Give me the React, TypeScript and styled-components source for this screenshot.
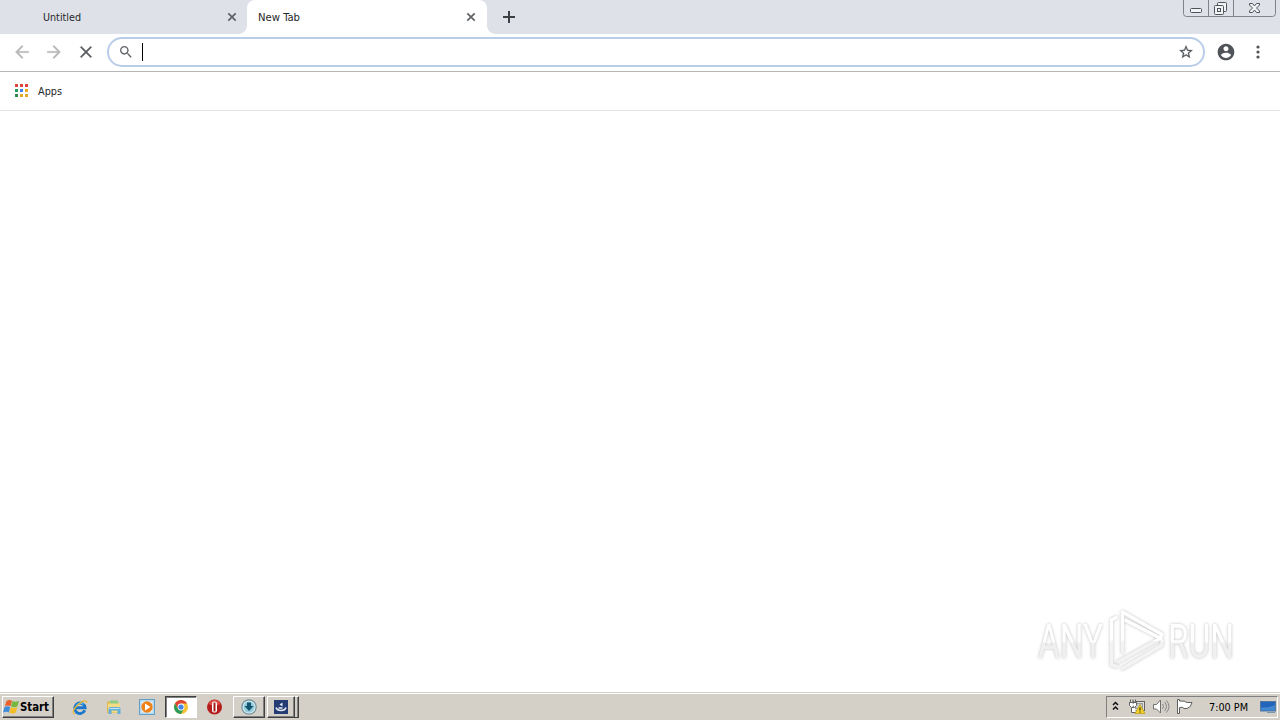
import type { ReactNode } from "react";
import styled, { createGlobalStyle, css } from "styled-components";

export default function App() {
  return (
    <>
      <GlobalStyle />
      <Desktop>
        <TabStrip>
          <Tab $width={247} $pad={43}>
            <TabTitle $width={38}>Untitled</TabTitle>
            <CloseIcon />
          </Tab>
          <Tab $active $width={240} $pad={11}>
            <TabTitle $width={42}>New Tab</TabTitle>
            <CloseIcon />
          </Tab>
          <NewTab>
            <svg width="12" height="12" viewBox="0 0 12 12">
              <path d="M6 0v12M0 6h12" stroke="#3c4043" strokeWidth="2" />
            </svg>
          </NewTab>
          <WindowControls />
        </TabStrip>
        <Toolbar>
          <NavIcon>
            <Material size={20} bold color="#b8b8b8" d="M20 11H7.83l5.59-5.59L12 4l-8 8 8 8 1.41-1.41L7.83 13H20v-2z" />
          </NavIcon>
          <NavIcon>
            <Material size={20} bold color="#b8b8b8" d="M12 4l-1.41 1.41L16.17 11H4v2h12.17l-5.58 5.59L12 20l8-8z" />
          </NavIcon>
          <NavIcon>
            <Material size={20} bold color="#5a5d61" d="M19 6.41L17.59 5 12 10.59 6.41 5 5 6.41 10.59 12 5 17.59 6.41 19 12 13.41 17.59 19 19 17.59 13.41 12z" />
          </NavIcon>
          <Omnibox>
            <Material
              size={16}
              color="#5f6368"
              d="M15.5 14h-.79l-.28-.27C15.41 12.59 16 11.11 16 9.5 16 5.91 13.09 3 9.5 3S3 5.91 3 9.5 5.91 16 9.5 16c1.61 0 3.09-.59 4.23-1.57l.27.28v.79l5 4.99L20.49 19l-4.99-5zm-6 0C7.01 14 5 11.99 5 9.5S7.01 5 9.5 5 14 7.01 14 9.5 11.99 14 9.5 14z"
            />
            <Caret />
            <Material
              size={16}
              bold
              color="#4f5358"
              d="M22 9.24l-7.19-.62L12 2 9.19 8.63 2 9.24l5.46 4.73L5.82 21 12 17.27 18.18 21l-1.63-7.03L22 9.24zM12 15.4l-3.76 2.27 1-4.28-3.32-2.88 4.38-.38L12 6.1l1.71 4.04 4.38.38-3.32 2.88 1 4.28L12 15.4z"
            />
          </Omnibox>
          <Profile>
            <Material
              size={20}
              color="#505357"
              d="M12 2C6.48 2 2 6.48 2 12s4.48 10 10 10 10-4.48 10-10S17.52 2 12 2zm0 3c1.66 0 3 1.34 3 3s-1.34 3-3 3-3-1.34-3-3 1.34-3 3-3zm0 14.2c-2.5 0-4.71-1.28-6-3.22.03-1.99 4-3.08 6-3.08 1.99 0 5.97 1.09 6 3.08-1.29 1.94-3.5 3.22-6 3.22z"
            />
          </Profile>
          <Menu>
            <svg width="4" height="14" viewBox="0 0 4 14" fill="#505357">
              <circle cx="2" cy="2" r="1.6" />
              <circle cx="2" cy="7" r="1.6" />
              <circle cx="2" cy="12" r="1.6" />
            </svg>
          </Menu>
        </Toolbar>
        <BookmarkBar>
          <AppsGrid>
            {appDots.map((color, i) => (
              <Dot key={i} $color={color} />
            ))}
          </AppsGrid>
          <Label $width={24}>Apps</Label>
        </BookmarkBar>
        <Page />
        <Taskbar>
          <StartButton>
            <WindowsFlag />
            <Label $width={29} $bold>
              Start
            </Label>
          </StartButton>
          <QuickLaunch>
            <ExplorerIcon />
            <FolderIcon />
            <PlayerIcon />
          </QuickLaunch>
          <TaskButton $kind="pressed" $width={32}>
            <ChromeIcon />
          </TaskButton>
          <TaskButton $kind="flat" $width={36}>
            <OperaIcon />
          </TaskButton>
          <TaskButton $kind="raised" $width={32}>
            <DownloadIcon />
          </TaskButton>
          <Gap />
          <TaskButton $kind="raised" $width={28}>
            <InstallerIcon />
          </TaskButton>
          <StackEdge />
          <Tray>
            <TrayIcons />
            <Clock>
              <Label $width={39}>7:00 PM</Label>
            </Clock>
            <DesktopIcon />
          </Tray>
        </Taskbar>
        <Watermark>
          <WatermarkArt />
        </Watermark>
      </Desktop>
    </>
  );
}

const appDots = [
  "#dc4638", "#dc4638", "#dc4638",
  "#249a5b", "#3b82ee", "#edaa22",
  "#33864f", "#e3a92c", "#e3a92c",
];

type MaterialProps = { size: number; color: string; d: string; bold?: boolean };

function Material({ size, color, d, bold }: MaterialProps) {
  return (
    <svg width={size} height={size} viewBox="0 0 24 24" fill={color}>
      <path d={d} stroke={bold ? color : "none"} strokeWidth="0.3" />
    </svg>
  );
}

function Label({ children, $width, $bold }: { children: ReactNode; $width: number; $bold?: boolean }) {
  return (
    <LabelBox $width={$width}>
      <svg width={$width} height="15">
        <text
          x="0"
          y="11"
          fontSize={$bold ? 11.5 : 11}
          fontWeight={$bold ? 700 : 400}
          textLength={$width}
          lengthAdjust="spacingAndGlyphs"
        >
          {children}
        </text>
      </svg>
    </LabelBox>
  );
}

function TabTitle({ children, $width }: { children: ReactNode; $width: number }) {
  return (
    <TitleBox>
      <Label $width={$width}>{children}</Label>
    </TitleBox>
  );
}

function CloseIcon() {
  return (
    <svg width="8" height="8" viewBox="0 0 8 8">
      <path d="M.3.3l7.4 7.4M7.7.3L.3 7.7" stroke="#5f6368" strokeWidth="1.7" />
    </svg>
  );
}

function WindowControls() {
  return (
    <Controls>
      <svg width="93" height="17" viewBox="0 0 93 17" fill="none" stroke="#7f838b">
        <path d="M.5 0v13.5q0 3 3 3h86q3 0 3-3V0M25.5 0v16M50.5 0v16" />
        <g stroke="#4f535b" fill="#f2f3f5">
          <rect x="7.5" y="8.5" width="11" height="4" rx="1" />
          <rect x="34.5" y="2.5" width="9" height="9" rx="1" />
          <rect x="31.5" y="5.5" width="9" height="9" rx="1" />
          <rect x="34.5" y="8.5" width="3" height="3" />
          <path d="M66.5 3.5h3l2 2.5 2-2.5h3v1.5l-3 3 3 3v1.5h-3l-2-2.5-2 2.5h-3V11l3-3-3-3z" />
        </g>
      </svg>
    </Controls>
  );
}

function WindowsFlag() {
  return (
    <svg width="17" height="16" viewBox="0 0 17 16">
      <path d="M3.5 2q3-1.8 5.500-.3L7.500 7.300q-3-1.500-5.700.2z" fill="#e8602c" />
      <path d="M9.5 2q3 1.700 6.500-.3l-1.500 5.600q-3 1.700-6.500.2z" fill="#76b83d" />
      <path d="M1.5 8.2q3-1.700 5.700-.2l-1.400 5.500q-3-1.500-5.800.3z" fill="#3e8ddb" />
      <path d="M7.8 8.3q3 1.500 6.500-.2l-1.400 5.400q-3 1.800-6.500.2z" fill="#f5bd28" />
    </svg>
  );
}

function ExplorerIcon() {
  return (
    <svg width="16" height="17" viewBox="0 0 17 17" fill="none">
      <path d="M13.6 11.5A5.6 5.6 0 1 1 14 8.8H4" stroke="#1c77c8" strokeWidth="3" />
      <path d="M4.5 6.8A4.8 4.8 0 0 1 12 5" stroke="#58bdf0" strokeWidth="1.3" />
      <path d="M2.8 15.2C-.8 14.5 2.5 8.5 7 5s9-5.3 8.8-1.2" stroke="#e8b92e" strokeWidth="1.3" />
    </svg>
  );
}

function FolderIcon() {
  return (
    <svg width="16" height="16" viewBox="0 0 16 16">
      <path d="M1 2.500h5l1 1.500h6v10H1z" fill="#dfb950" />
      <path d="M4 1.500h8v5H4z" fill="#8fcb83" />
      <path d="M2 4.500h12v9H2z" fill="#f3dc82" />
      <path d="M2.5 15V10q0-2 2-2h8q2 0 2 2v5h-3v-3.500h-6V15z" fill="#62aedb" />
      <path d="M3.5 9.500h10" stroke="#c4e6f5" />
    </svg>
  );
}

function PlayerIcon() {
  return (
    <svg width="16" height="16" viewBox="0 0 16 16">
      <rect x=".5" y=".5" width="15" height="15" fill="#b9d9ee" stroke="#609fc9" />
      <rect x="2.5" y="2.5" width="11" height="11" fill="#e5f0f5" />
      <circle cx="8" cy="8" r="5.7" fill="#ef8119" />
      <path d="M6 4.500v7L11.500 8z" fill="#fff" />
    </svg>
  );
}

function ChromeIcon() {
  return (
    <svg width="14" height="14" viewBox="0 0 14 14">
      <circle cx="7" cy="7" r="7" fill="#f5c333" />
      <path d="M.94 3.500A7 7 0 0 1 13.060 3.500H7L4 8.800z" fill="#df4436" />
      <path d="M.94 3.500L4 8.750 7 10.500l2.500-1L7 14A7 7 0 0 1 .94 3.500z" fill="#2c9d59" />
      <circle cx="7" cy="7" r="3.4" fill="#fff" />
      <circle cx="7" cy="7" r="2.6" fill="#4386e8" />
    </svg>
  );
}

function OperaIcon() {
  return (
    <svg width="16" height="16" viewBox="0 0 16 16">
      <circle cx="7.5" cy="8" r="7.5" fill="#b51d1d" />
      <path d="M1.5 5a6.5 6.5 0 0 1 12 0Q7.500 8 1.500 5z" fill="#dc4a43" />
      <rect x="5" y="2.5" width="5" height="11" rx="2" fill="#fff" />
      <rect x="6.500" y="3.500" width="2" height="9" fill="#a51a1a" />
    </svg>
  );
}

function DownloadIcon() {
  return (
    <svg width="16" height="16" viewBox="0 0 16 16">
      <circle cx="8" cy="8" r="7.2" fill="#d8edf2" stroke="#708e9a" strokeWidth="1.2" />
      <circle cx="8" cy="8" r="5.5" fill="#93cbda" />
      <path d="M6 3.500h4V7h2.500L8 12 3.500 7H6z" fill="#12546f" />
    </svg>
  );
}

function InstallerIcon() {
  return (
    <svg width="14" height="14" viewBox="0 0 14 14">
      <rect width="14" height="14" fill="#243b73" />
      <path d="M2 7.5q1 3 5 3t5-3M4.500 8h4" fill="none" stroke="#e8edf5" strokeWidth="1.6" />
      <path d="M5.5 4.500L8.500 2.500v4z" fill="#e8edf5" />
    </svg>
  );
}

function TrayIcons() {
  return (
    <svg width="90" height="20" viewBox="1 0 90 20">
      <path d="M7 8l2.5-2.5L12 8M7 12.5L9.500 10l2.500 2.500" fill="none" stroke="#111" strokeWidth="1.5" />
      <g stroke="#626262" fill="#fff">
        <rect x="27.5" y="4.5" width="11" height="9" fill="#e2e2df" />
        <rect x="29.5" y="6.5" width="7" height="5" fill="#c9cbc9" stroke="#999" />
        <path d="M24.5 2.500v3h-1v3l2 2v5h5M29.500 2.500v3h1v3l-2 2h-3M27 2.500v3M23.500 5.500h7" />
      </g>
      <path d="M34 7.500l5 9H29z" fill="#f3d12c" stroke="#bf9811" strokeWidth=".7" />
      <path d="M34 10.500v3M34 14.500v1" stroke="#302800" strokeWidth="1.2" />
      <path d="M47.5 7.500h3L54.500 3v13l-4-4h-3z" fill="#fff" stroke="#707070" />
      <path d="M56.5 7q2 2.500 0 5M58.500 5q4 4.500 0 9M60.500 3.500q5 6 0 12" fill="none" stroke="#85858a" />
      <path d="M71.5 2.500v14h2v-6q3-1 4.500 1h3q4-1 5-6h-5q-2-2-7.500-1.500v-1.500z" fill="#fff" stroke="#5f5f5f" />
    </svg>
  );
}

function DesktopIcon() {
  return (
    <svg width="16" height="14" viewBox="0 0 16 14">
      <rect x=".5" y="1.5" width="15" height="9.5" fill="#2264bc" stroke="#55789f" />
      <path d="M1 7.500Q8 8 15 5v5.500H1z" fill="#4387cf" />
      <path d="M7 12.500h8" stroke="#7d96ab" />
    </svg>
  );
}

function WatermarkArt() {
  return (
    <svg width="230" height="76" viewBox="1030 602 230 76">
      <defs>
        <linearGradient id="fade" x1="0" y1="0" x2="0" y2="1">
          <stop offset="0.5" stopColor="#fff" />
          <stop offset="0.53" stopColor="#f0f0f0" />
        </linearGradient>
        <linearGradient id="markFade" gradientUnits="userSpaceOnUse" x1="0" y1="610" x2="0" y2="670">
          <stop offset="0.5" stopColor="#fff" />
          <stop offset="0.53" stopColor="#f3f3f3" />
        </linearGradient>
      </defs>
      <g fill="url(#fade)" fontFamily="Roboto, sans-serif" fontSize="49">
        <text x="1038" y="658" textLength="65" lengthAdjust="spacingAndGlyphs">
          ANY
        </text>
        <text x="1168" y="658" textLength="66" lengthAdjust="spacingAndGlyphs">
          RUN
        </text>
      </g>
      <g fill="none" stroke="url(#markFade)" strokeWidth="3.4" strokeLinejoin="round" strokeLinecap="round">
        <path d="M1116 617.5L1111.500 620v45l5 1.500" />
        <path d="M1122.5 652v-40L1162 634.500l-2 3.500-34-17.500" />
        <path d="M1118 662L1161 638M1122.500 668.500L1162 645v-4" />
      </g>
    </svg>
  );
}

const GlobalStyle = createGlobalStyle`
  * {
    box-sizing: border-box;
  }

  body {
    margin: 0;
    overflow: hidden;
    font-family: "DejaVu Sans Condensed", "DejaVu Sans", sans-serif;
    font-size: 11px;
    background: #fff;
  }

  svg {
    display: block;
    flex-shrink: 0;
    overflow: visible;
  }
`;

const Desktop = styled.main`
  position: relative;
  display: flex;
  flex-direction: column;
  width: 1280px;
  height: 720px;
`;

const TabStrip = styled.div`
  display: flex;
  height: 34px;
  background: #dee1e8;
`;

const Tab = styled.div<{ $active?: boolean; $width: number; $pad: number }>`
  position: relative;
  display: flex;
  align-items: center;
  width: ${(props) => props.$width}px;
  padding: 0 11px 0 ${(props) => props.$pad}px;

  ${(props) =>
    props.$active &&
    css`
      padding-right: 12px;
      background: #fff;
      border-radius: 8px 8px 0 0;

      &::before,
      &::after {
        content: "";
        position: absolute;
        bottom: 0;
        width: 8px;
        height: 8px;
      }

      &::before {
        left: -8px;
        background: radial-gradient(circle at 0 0, transparent 7.5px, #fff 8px);
      }

      &::after {
        right: -8px;
        background: radial-gradient(circle at 100% 0, transparent 7.5px, #fff 8px);
      }
    `}
`;

const TitleBox = styled.span`
  flex: 1;
  color: #25272a;
`;

const LabelBox = styled.span<{ $width: number }>`
  display: block;
  width: ${(props) => props.$width}px;

  text {
    fill: currentColor;
  }
`;

const NewTab = styled.div`
  display: flex;
  align-items: center;
  padding-left: 16px;
`;

const Controls = styled.div`
  margin-left: auto;
  padding-right: 4px;
`;

const Toolbar = styled.div`
  display: flex;
  align-items: center;
  height: 38px;
  padding: 0 5px 1px 6px;
  background: #fff;
  border-bottom: 1px solid #b5b7b9;
`;

const NavIcon = styled.div`
  display: flex;
  justify-content: center;
  width: 32px;
`;

const Omnibox = styled.div`
  display: flex;
  align-items: center;
  width: 1098px;
  height: 30px;
  margin-left: 5px;
  padding: 0 9px;
  border: 2px solid #b9cde9;
  border-radius: 15px;
`;

const Caret = styled.span`
  width: 1px;
  height: 18px;
  margin: 0 auto 0 8px;
  background: #000;
`;

const Profile = styled.div`
  margin-left: 11px;
`;

const Menu = styled.div`
  margin-left: 20px;
`;

const BookmarkBar = styled.div`
  display: flex;
  align-items: center;
  gap: 10px;
  height: 39px;
  padding: 0 15px;
  color: #25272a;
  border-bottom: 1px solid #e1e5e9;
`;

const AppsGrid = styled.div`
  display: grid;
  grid-template-columns: repeat(3, 3px);
  gap: 2px;
  margin-bottom: 1px;
`;

const Dot = styled.span<{ $color: string }>`
  width: 3px;
  height: 3px;
  background: ${(props) => props.$color};
`;

const Page = styled.section`
  flex: 1;
`;

const Taskbar = styled.footer`
  display: flex;
  height: 28px;
  padding: 3px 2px 2px;
  background: #d4d0c8;
  border-top: 1px solid #d4d0c8;
  box-shadow: inset 0 1px #fff;
`;

const raised = css`
  border: 1px solid;
  border-color: #fff #404040 #404040 #fff;
  box-shadow: inset -1px -1px #808080;
`;

const StartButton = styled.div`
  display: flex;
  align-items: center;
  width: 52px;
  color: #000;
  ${raised}
`;

const QuickLaunch = styled.div`
  display: flex;
  align-items: center;
  justify-content: space-between;
  width: 111px;
  padding: 0 10px 0 18px;
`;

const TaskButton = styled.div<{ $kind: "raised" | "pressed" | "flat"; $width: number }>`
  display: flex;
  align-items: center;
  justify-content: center;
  width: ${(props) => props.$width}px;

  ${(props) => props.$kind === "raised" && raised}
  ${(props) =>
    props.$kind === "pressed" &&
    css`
      background: #fff;
      border: 1px solid;
      border-color: #404040 #fff #fff #404040;
      box-shadow: inset 1px 1px #808080;
    `}
`;

const Gap = styled.span`
  width: 2px;
`;

const StackEdge = styled.span`
  width: 4px;
  border-top: 1px solid #fff;
  border-right: 1px solid #404040;
  border-bottom: 1px solid #404040;
  box-shadow: inset -1px 0 #808080;
`;

const Tray = styled.div`
  display: flex;
  align-items: center;
  width: 172px;
  margin-left: auto;
  border: 1px solid;
  border-color: #808080 #fff #fff #808080;
`;

const Clock = styled.div`
  margin-left: 12px;
  margin-right: 12px;
  color: #000;
`;

const Watermark = styled.div`
  position: absolute;
  top: 602px;
  left: 1030px;
  filter: drop-shadow(0 0 1.5px rgba(0, 0, 0, 0.25));
`;
